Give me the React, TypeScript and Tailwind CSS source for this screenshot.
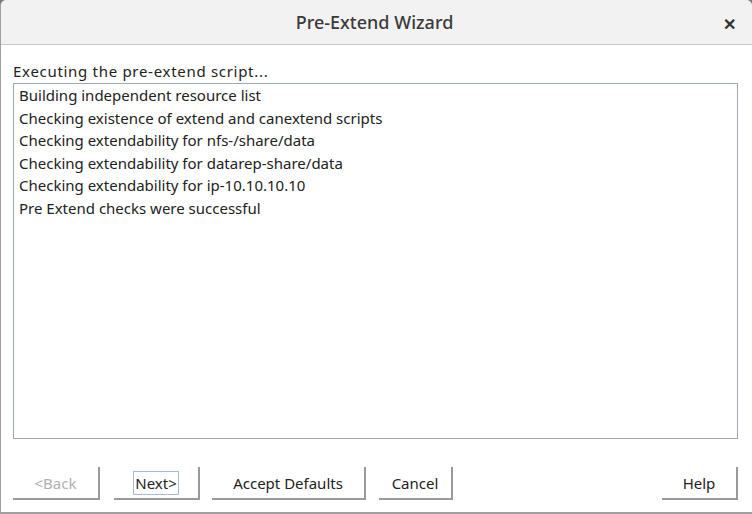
import React from 'react'

const lines = [
  'Building independent resource list',
  'Checking existence of extend and canextend scripts',
  'Checking extendability for nfs-/share/data',
  'Checking extendability for datarep-share/data',
  'Checking extendability for ip-10.10.10.10',
  'Pre Extend checks were successful',
]

const Btn = ({ label, className = '', disabled = false, focused = false }: { label: string; className?: string; disabled?: boolean; focused?: boolean }) => (
  <button
    className={`h-[33px] bg-white border-r-2 border-b-2 border-[#9a9a9a] text-[15px] flex items-center justify-center ${disabled ? 'text-[#b0b0b0]' : 'text-[#222]'} ${className}`}
  >
    <span className={focused ? 'border border-[#a8bcd8] px-[1px] leading-[22px]' : 'leading-[22px]'}>{label}</span>
  </button>
)

export default function App() {
  return (
    <div className="w-[752px] h-[514px] bg-[#7a7a7a] font-['Noto_Sans',sans-serif]">
      <div className="w-full h-full flex flex-col bg-white rounded-t-[6px] overflow-hidden border-l border-b-2 border-[#a0a0a0]">
        {/* title bar */}
        <div className="h-[45px] shrink-0 bg-[#f2f2f2] border-b border-[#c8c8c8] relative flex items-center justify-center">
          <span className="text-[18px] font-medium text-[#3a3a3a] ml-[-4px]">Pre-Extend Wizard</span>
          <span className="absolute right-[16px] top-[12px] text-[16px] font-bold text-[#333]">✕</span>
        </div>

        <div className="flex-1 flex flex-col pl-[12px] pr-[14px] pt-[16px]">
          <div className="text-[15px] text-[#222] leading-[21px] tracking-[0.7px]">Executing the pre-extend script...</div>
          <div className="h-[356px] border border-[#9aa8bc] mt-[1px] px-[5px]">
            {lines.map((l) => (
              <div key={l} className="text-[15px] text-[#222] leading-[22.6px]">{l}</div>
            ))}
          </div>
          <div className="flex mt-[28px]">
            <Btn label="<Back" disabled className="w-[87px]" />
            <Btn label="Next>" focused className="w-[86px] ml-[14px]" />
            <Btn label="Accept Defaults" className="w-[154px] ml-[12px]" />
            <Btn label="Cancel" className="w-[74px] ml-[13px]" />
            <div className="flex-1" />
            <Btn label="Help" className="w-[76px]" />
          </div>
        </div>
      </div>
    </div>
  )
}
